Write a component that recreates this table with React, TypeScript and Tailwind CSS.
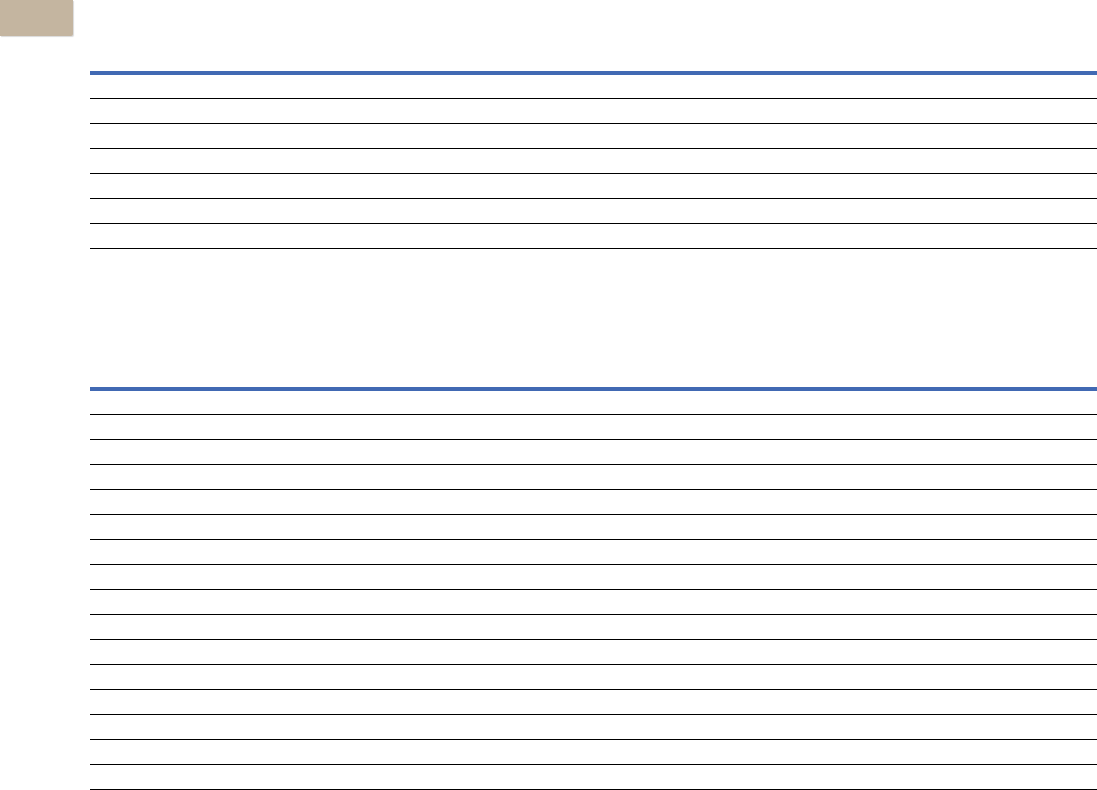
export default function App() {
  const rows1 = Array.from({ length: 7 });
  const rows2 = Array.from({ length: 16 });
  return (
    <div className="w-[1097px] h-[790px] overflow-hidden bg-white font-['Liberation_Sans',sans-serif]">
      <div className="w-[73px] h-[36px] bg-[#c4b5a0] rounded-br-[2px] shadow-[1px_1px_1px_rgba(0,0,0,0.15)]" />
      <div className="pl-[90px] pt-[35px]">
        <div className="h-[4px] bg-[#4169b3]" />
        {rows1.map((_, i) => (
          <div key={i} className={`${i === 0 ? "h-[24px]" : "h-[25px]"} border-b border-black`} />
        ))}
      </div>
      <div className="pl-[90px] pt-[138px]">
        <div className="h-[4px] bg-[#4169b3]" />
        {rows2.map((_, i) => (
          <div key={i} className={`${i === 0 ? "h-[24px]" : "h-[25px]"} border-b border-black`} />
        ))}
      </div>
    </div>
  );
}
